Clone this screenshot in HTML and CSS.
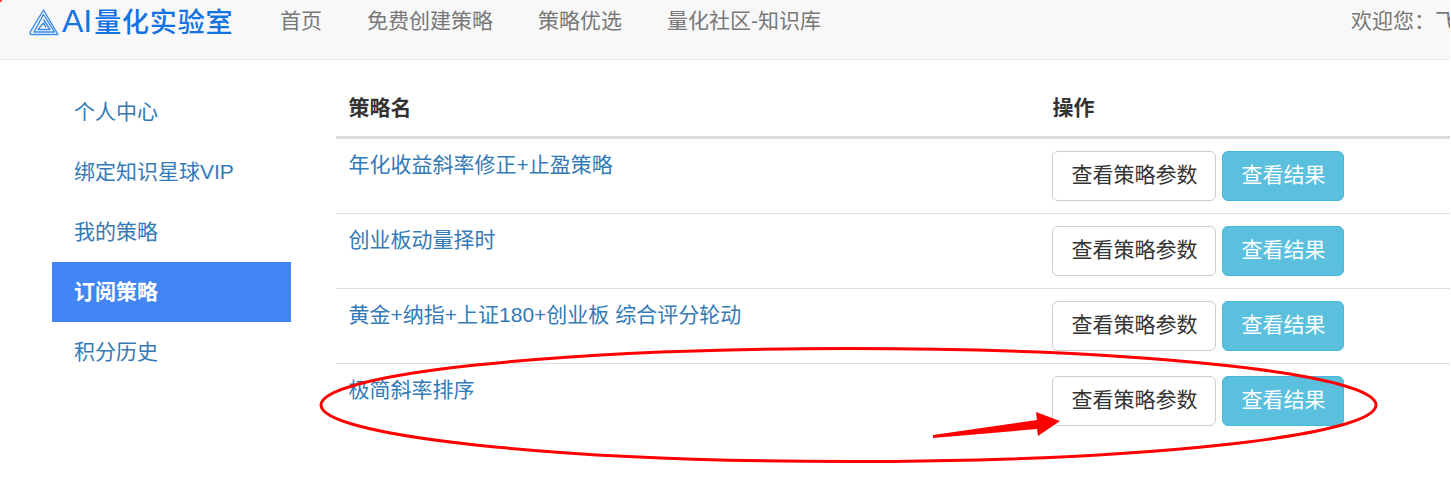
FILE: index.html
```html
<!DOCTYPE html>
<html lang="zh-CN">
<head>
    <meta charset="UTF-8">
    <title>AI量化实验室</title>
    <link rel="stylesheet" href="styles.css">
</head>
<body>
    <div id="app">
        <nav class="navbar">
            <a class="brand" href="#">
                <svg class="brand-icon" width="30" height="27" viewBox="0 0 30 27" fill="none" stroke="#3b8be8" stroke-width="1.4" stroke-linejoin="round">
                    <path d="M14.5 1 L29 25.5 L3 25.5 Q0.2 25.5 1.2 23 Z"/>
                    <path d="M14.5 5.5 L25.5 23 L5 23 Z"/>
                    <path d="M14.5 10.5 L21 20.5 L9 20.5 L14.5 14 L17 18.5"/>
                </svg>
                <span class="brand-name">AI<span class="brand-cn">量化实验室</span></span>
            </a>
            <a class="nav-link" href="#">首页</a>
            <a class="nav-link" href="#">免费创建策略</a>
            <a class="nav-link" href="#">策略优选</a>
            <a class="nav-link" href="#">量化社区-知识库</a>
            <span class="welcome">欢迎您：飞</span>
        </nav>

        <div class="content">
            <ul class="side-menu">
                <li><a href="#">个人中心</a></li>
                <li><a href="#">绑定知识星球VIP</a></li>
                <li><a href="#">我的策略</a></li>
                <li class="active"><a href="#">订阅策略</a></li>
                <li><a href="#">积分历史</a></li>
            </ul>

            <table class="strategy-table">
                <thead>
                    <tr>
                        <th class="name-col">策略名</th>
                        <th>操作</th>
                    </tr>
                </thead>
                <tbody>
                    <tr>
                        <td class="name-cell"><a href="#">年化收益斜率修正+止盈策略</a></td>
                        <td><div class="actions"><button class="btn">查看策略参数</button><button class="btn btn-info">查看结果</button></div></td>
                    </tr>
                    <tr>
                        <td class="name-cell"><a href="#">创业板动量择时</a></td>
                        <td><div class="actions"><button class="btn">查看策略参数</button><button class="btn btn-info">查看结果</button></div></td>
                    </tr>
                    <tr>
                        <td class="name-cell"><a href="#">黄金+纳指+上证180+创业板 综合评分轮动</a></td>
                        <td><div class="actions"><button class="btn">查看策略参数</button><button class="btn btn-info">查看结果</button></div></td>
                    </tr>
                    <tr>
                        <td class="name-cell"><a href="#">极简斜率排序</a></td>
                        <td><div class="actions"><button class="btn">查看策略参数</button><button class="btn btn-info">查看结果</button></div></td>
                    </tr>
                </tbody>
            </table>
        </div>

        <!-- red annotation drawn over the screenshot -->
        <svg class="annotation" width="1451" height="483" viewBox="0 0 1451 483">
            <path d="M0 0 L2 0 L1 3 Z" fill="#f00"/>
            <ellipse cx="848.5" cy="405" rx="527.5" ry="56.5" fill="none" stroke="#f00" stroke-width="3"/>
            <path d="M933 435 L1037 420 L1036 412 L1060 421 L1038 436 L1037 429 L933 438 Z" fill="#f00"/>
        </svg>
    </div>
</body>
</html>
```

FILE: styles.css
```css
html, body {
    margin: 0;
    padding: 0;
    background-color: #fff;
    overflow: hidden;
}

body {
    font-family: "Liberation Sans", "Noto Sans CJK SC", sans-serif;
    font-size: 21px;
    line-height: 30px;
    color: #333;
}

a {
    color: #337ab7;
    text-decoration: none;
}

#app {
    position: relative;
    width: 1450px;
    height: 483px;
    overflow: hidden;
}

.navbar {
    display: flex;
    align-items: flex-start;
    height: 59px;
    padding-left: 29px;
    background-color: #f8f8f8;
    border-bottom: 1px solid #e7e7e7;
    white-space: nowrap;
}

.brand {
    display: flex;
    align-items: center;
    gap: 3px;
    height: 44px;
    width: 251px;
    flex: none;
}

.brand-name {
    font-size: 32px;
    color: #1373e4;
}

.brand-cn {
    margin-left: 2px;
    font-size: 27px;
    font-weight: 500;
    letter-spacing: 0.8px;
}

.nav-link {
    margin-right: 45px;
    line-height: 41px;
    color: #777;
}

.welcome {
    margin-left: auto;
    width: 99px;
    flex: none;
    line-height: 41px;
    color: #777;
}

.content {
    display: flex;
    align-items: flex-start;
    padding: 22px 0 0 52px;
}

.side-menu {
    width: 239px;
    flex: none;
    margin: 0 45px 0 0;
    padding: 0;
    list-style: none;
}

.side-menu li a {
    display: block;
    padding: 15px 22px;
}

.side-menu li.active a {
    background-color: #4285f4;
    color: #fff;
    font-weight: bold;
}

.strategy-table {
    width: 1114px;
    flex: none;
    border-collapse: collapse;
    border-spacing: 0;
}

.strategy-table th {
    padding: 11px 12px 13px 12.5px;
    text-align: left;
    border-bottom: 3px solid #ddd;
}

.name-col {
    width: 679.5px;
}

.strategy-table td {
    padding: 12px;
    vertical-align: top;
    border-top: 1px solid #ddd;
}

.strategy-table td.name-cell {
    padding: 11px 12px 13px 12.5px;
}

.strategy-table tbody tr:first-child td {
    border-top: 0;
}

.actions {
    display: flex;
    gap: 6px;
}

.btn {
    height: 50px;
    padding: 0 17.5px 2px 18.5px;
    font: inherit;
    color: #333;
    background-color: #fff;
    border: 1px solid #ccc;
    border-radius: 6px;
    cursor: pointer;
}

.btn-info {
    color: #fff;
    background-color: #5bc0de;
    border-color: #46b8da;
}

.annotation {
    position: absolute;
    top: 0;
    left: 0;
    pointer-events: none;
}
```
